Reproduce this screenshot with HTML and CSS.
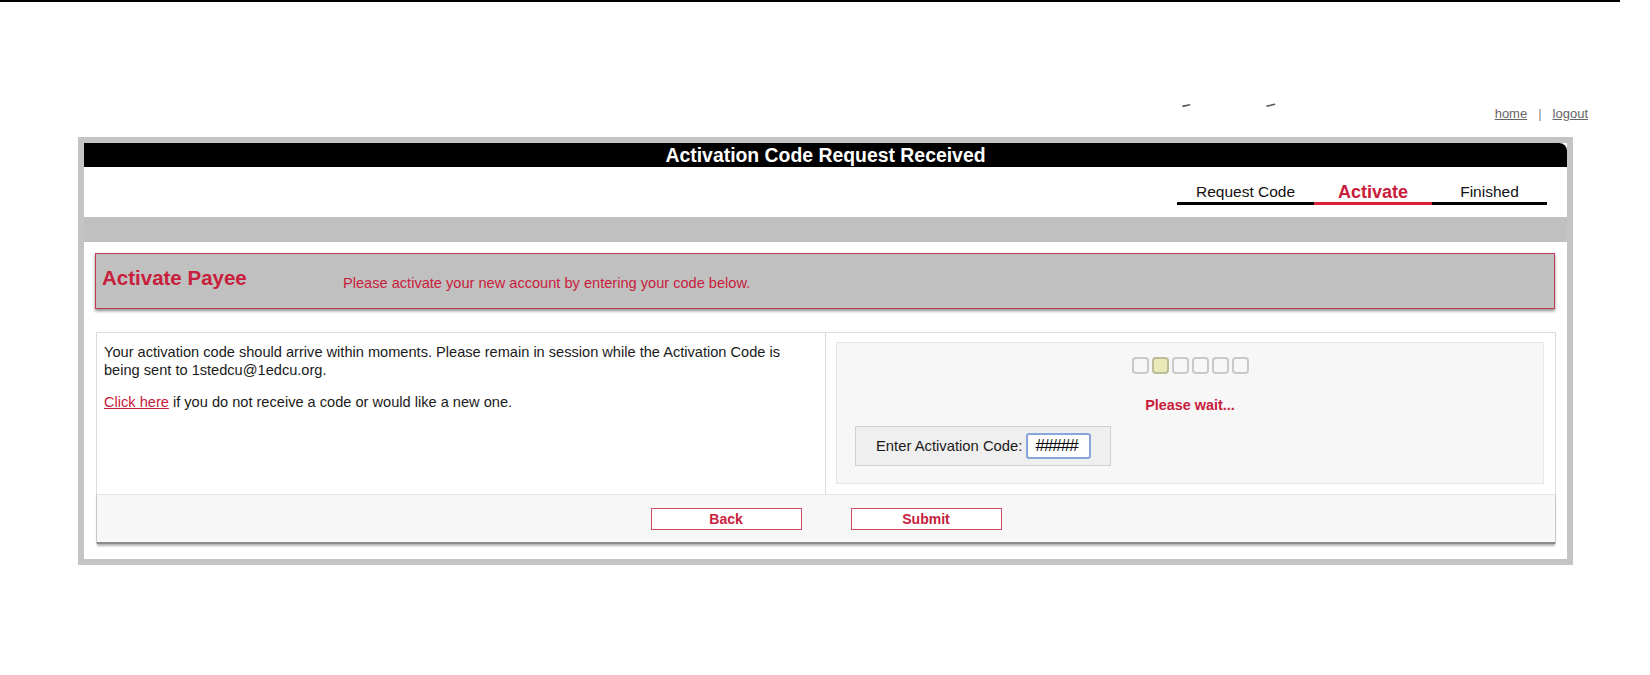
FILE: index.html
```html
<!DOCTYPE html>
<html lang="en">
<head>
    <meta charset="UTF-8">
    <title>Activation Code Request Received</title>
    <link rel="stylesheet" href="styles.css">
</head>
<body>
    <div class="top-rule"></div>
    <div class="top-row">
        <div class="logo-marks">
            <svg width="9" height="5" viewBox="0 0 9 5"><path d="M0 2.6 L8 1 L8.5 2.2 L1 4.2 Z" fill="#555"/></svg>
            <svg width="10" height="5" viewBox="0 0 10 5"><path d="M0 2.4 L9 0.6 L9.5 1.8 L1 4 Z" fill="#555"/></svg>
        </div>
        <div class="top-links">
            <a href="#">home</a><span class="sep">|</span><a href="#">logout</a>
        </div>
    </div>

    <div class="frame">
        <div class="title-bar">Activation Code Request Received</div>

        <div class="steps">
            <div class="step step-request">Request Code</div>
            <div class="step step-activate active">Activate</div>
            <div class="step step-finished">Finished</div>
        </div>

        <div class="gray-bar"></div>

        <div class="payee-box">
            <div class="payee-title">Activate Payee</div>
            <div class="payee-msg">Please activate your new account by entering your code below.</div>
        </div>

        <div class="content">
            <div class="cells">
                <div class="cell-left">
                    <p class="info">Your activation code should arrive within moments. Please remain in session while the Activation Code is being sent to 1stedcu@1edcu.org.</p>
                    <p class="info"><a href="#" class="red-link">Click here</a> if you do not receive a code or would like a new one.</p>
                </div>
                <div class="cell-right">
                    <div class="code-panel">
                        <div class="loader">
                            <span class="sq"></span>
                            <span class="sq on"></span>
                            <span class="sq"></span>
                            <span class="sq"></span>
                            <span class="sq"></span>
                            <span class="sq"></span>
                        </div>
                        <div class="wait">Please wait...</div>
                        <div class="code-box">
                            <label for="code">Enter Activation Code:</label>
                            <input type="text" id="code" class="code-input" value="#####">
                        </div>
                    </div>
                </div>
            </div>
            <div class="actions">
                <button class="btn" id="back-button">Back</button>
                <button class="btn" id="submit-button">Submit</button>
            </div>
        </div>
    </div>
</body>
</html>
```

FILE: styles.css
```css
body {
    margin: 0;
    font-family: "Liberation Sans", Arial, sans-serif;
    background-color: #fff;
    color: #1a1a1a;
}
.top-rule {
    width: 1620px;
    height: 2px;
    background-color: #000;
}
.top-row {
    display: flex;
    width: 1650px;
    height: 135px;
}
.logo-marks {
    display: flex;
    gap: 75px;
    margin: 101px 0 0 1182px;
    height: 5px;
}
.top-links {
    margin: 104px 62px 0 auto;
    font-size: 13px;
    line-height: 16px;
    color: #777;
}
.top-links a {
    color: #666;
}
.top-links .sep {
    margin: 0 11px;
    color: #888;
}
.frame {
    margin-left: 78px;
    width: 1495px;
    box-sizing: border-box;
    border: 6px solid #c4c4c4;
    padding-bottom: 15px;
}
.title-bar {
    height: 24px;
    line-height: 24px;
    background-color: #000;
    color: #fff;
    font-size: 19.4px;
    font-weight: bold;
    text-align: center;
    border-radius: 0 8px 0 0;
}
.steps {
    display: flex;
    justify-content: flex-end;
    align-items: flex-end;
    height: 50px;
    box-sizing: border-box;
    padding: 0 20px 12px 0;
}
.step {
    border-bottom: 3px solid #000;
    text-align: center;
    font-size: 15.5px;
    line-height: 20px;
    color: #111;
}
.step-request {
    width: 137px;
}
.step-activate {
    width: 118px;
}
.step-finished {
    width: 115px;
}
.step.active {
    color: #c8203c;
    font-weight: bold;
    font-size: 18px;
    border-bottom-color: #dc1f3a;
}
.gray-bar {
    height: 25px;
    background-color: #c0c0c0;
}
.payee-box {
    display: flex;
    align-items: center;
    height: 56px;
    box-sizing: border-box;
    margin: 11px 12px 0 11px;
    padding-left: 6px;
    background-color: #c0c0c0;
    border: 1px solid #c43a55;
    box-shadow: 0 2px 3px rgba(0, 0, 0, 0.45);
    color: #c8203c;
}
.payee-title {
    width: 241px;
    font-size: 20.5px;
    font-weight: bold;
    padding-bottom: 6px;
}
.payee-msg {
    font-size: 14.6px;
    padding-top: 3px;
}
.content {
    margin: 23px 11px 0 12px;
    border: 1px solid #dcdcdc;
    border-bottom: none;
}
.cells {
    display: grid;
    grid-template-columns: 1fr 1fr;
    height: 161px;
}
.cell-left {
    border-right: 1px solid #dcdcdc;
    padding: 10px 24px 10px 7px;
}
.info {
    margin: 0 0 14px 0;
    font-size: 14.6px;
    line-height: 18px;
}
.red-link {
    color: #c8203c;
}
.cell-right {
    padding: 9px 11px 10px 10px;
}
.code-panel {
    height: 100%;
    box-sizing: border-box;
    background-color: #f7f7f7;
    border: 1px solid #e6e6e6;
    padding-top: 14px;
}
.loader {
    display: flex;
    justify-content: center;
    gap: 3px;
}
.sq {
    width: 17px;
    height: 17px;
    box-sizing: border-box;
    border: 2px solid #c9c9c9;
    border-radius: 4px;
}
.sq.on {
    background-color: #e9eab8;
    border-color: #bcbc98;
}
.wait {
    margin-top: 22px;
    text-align: center;
    color: #c8203c;
    font-size: 14.4px;
    font-weight: bold;
    line-height: 18px;
}
.code-box {
    display: inline-flex;
    align-items: center;
    gap: 4px;
    height: 40px;
    box-sizing: border-box;
    margin: 12px 0 0 18px;
    padding: 0 19px 0 20px;
    background-color: #efefef;
    border: 1px solid #d0d0d0;
    font-size: 14.8px;
    color: #1a1a1a;
}
.code-input {
    width: 65px;
    height: 26px;
    box-sizing: border-box;
    border: 2px solid #86a5dc;
    border-radius: 3px;
    padding: 0 7px;
    font-family: "Liberation Sans", Arial, sans-serif;
    font-size: 17px;
    letter-spacing: -1px;
    color: #000;
    background-color: #fff;
}
.actions {
    display: flex;
    justify-content: center;
    align-items: center;
    gap: 49px;
    height: 47px;
    background-color: #f7f7f7;
    border-top: 1px solid #e4e4e4;
    border-bottom: 2px solid #8a8a8a;
    box-shadow: 0 2px 2px rgba(0, 0, 0, 0.3);
}
.btn {
    width: 151px;
    height: 22px;
    padding: 0;
    background-color: #fff;
    border: 1px solid #d24b64;
    color: #c8203c;
    font-family: "Liberation Sans", Arial, sans-serif;
    font-size: 14px;
    font-weight: bold;
    cursor: pointer;
}
```
